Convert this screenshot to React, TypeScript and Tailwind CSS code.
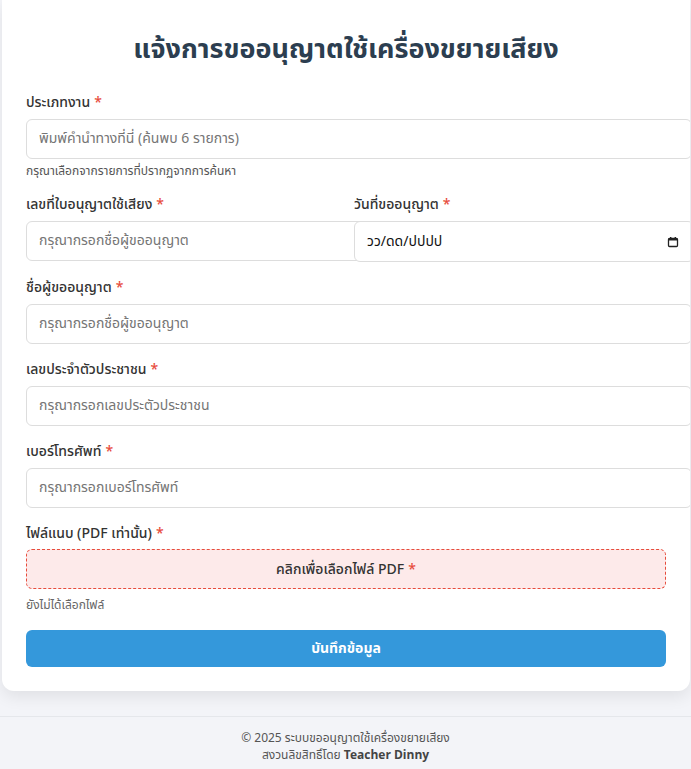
import React from "react";

const FONT = { fontFamily: '"Noto Sans Thai", "Noto Sans", "DejaVu Sans", sans-serif' };

function Req() {
  return <span className="ml-[4px] text-[#e74c3c]">*</span>;
}

function Label({ children }: { children: React.ReactNode }) {
  return (
    <label className="mb-[6px] block text-[14px] font-medium leading-[20px] text-[#333]">
      {children}
      <Req />
    </label>
  );
}

function TextInput({ placeholder }: { placeholder: string }) {
  return (
    <input
      type="text"
      placeholder={placeholder}
      className="box-content block w-full rounded-[6px] border border-[#dddddd] bg-white px-3 py-[10px] text-[14px] leading-[18px] text-[#333] outline-none placeholder:text-[#757575]"
    />
  );
}

function CalendarIcon() {
  return (
    <svg width="12" height="12" viewBox="0 0 12 12" fill="none">
      <rect x="1.5" y="2.5" width="9" height="8" rx="1" stroke="#222" strokeWidth="1.3" />
      <rect x="1.5" y="2.5" width="9" height="2" fill="#222" />
      <rect x="3" y="1" width="1.4" height="2" fill="#222" />
      <rect x="7.6" y="1" width="1.4" height="2" fill="#222" />
    </svg>
  );
}

export default function App() {
  return (
    <div className="min-h-[769px] bg-[#f3f4f8]" style={FONT}>
      <div className="ml-[2px] w-[688px] overflow-hidden rounded-b-xl bg-white px-6 pb-6 pt-[32px] shadow-[0_6px_16px_rgba(0,0,0,0.08)]">
        <h1 className="mb-[25px] text-center text-[27px] font-bold leading-[36px] text-[#2c3e50]">
          แจ้งการขออนุญาตใช้เครื่องขยายเสียง
        </h1>

        <div className="mb-4">
          <Label>ประเภทงาน</Label>
          <TextInput placeholder="พิมพ์คำนำทางที่นี่ (ค้นพบ 6 รายการ)" />
          <p className="mt-[4px] text-[12px] leading-[16px] text-[#555]">
            กรุณาเลือกจากรายการที่ปรากฏจากการค้นหา
          </p>
        </div>

        <div className="mb-4 grid grid-cols-2 gap-4">
          <div>
            <Label>เลขที่ใบอนุญาตใช้เสียง</Label>
            <TextInput placeholder="กรุณากรอกชื่อผู้ขออนุญาต" />
          </div>
          <div>
            <Label>วันที่ขออนุญาต</Label>
            <div className="box-content flex w-full items-center justify-between rounded-[6px] border border-[#dddddd] bg-white py-[10px] pl-3 pr-[14px] text-[14px] leading-[19px] text-[#111]">
              <span>วว/ดด/ปปปป</span>
              <CalendarIcon />
            </div>
          </div>
        </div>

        <div className="mb-4">
          <Label>ชื่อผู้ขออนุญาต</Label>
          <TextInput placeholder="กรุณากรอกชื่อผู้ขออนุญาต" />
        </div>

        <div className="mb-4">
          <Label>เลขประจำตัวประชาชน</Label>
          <TextInput placeholder="กรุณากรอกเลขประตัวประชาชน" />
        </div>

        <div className="mb-4">
          <Label>เบอร์โทรศัพท์</Label>
          <TextInput placeholder="กรุณากรอกเบอร์โทรศัพท์" />
        </div>

        <div className="mb-4">
          <label className="mb-[5px] block text-[14px] font-medium leading-[20px] text-[#333]">
            ไฟล์แนบ (PDF เท่านั้น)
            <Req />
          </label>
          <div className="flex h-[40px] items-center justify-center rounded-[6px] border border-dashed border-[#e74c3c] bg-[#fdeaea] text-[14px] font-medium text-[#333]">
            คลิกเพื่อเลือกไฟล์ PDF
            <Req />
          </div>
          <p className="mt-[7px] text-[12px] leading-[18px] text-[#666]">ยังไม่ได้เลือกไฟล์</p>
        </div>

        <button className="block h-[37px] w-full rounded-[6px] bg-[#3498db] text-[14px] font-bold text-white">
          บันทึกข้อมูล
        </button>
      </div>

      <footer className="mt-[25px] border-t border-[#e5e7eb] pb-4 pt-[13px] text-center text-[12px] leading-[17px] text-[#555]">
        <p>© 2025 ระบบขออนุญาตใช้เครื่องขยายเสียง</p>
        <p>
          สงวนลิขสิทธิ์โดย <span className="font-bold text-[#444]">Teacher Dinny</span>
        </p>
      </footer>
    </div>
  );
}
